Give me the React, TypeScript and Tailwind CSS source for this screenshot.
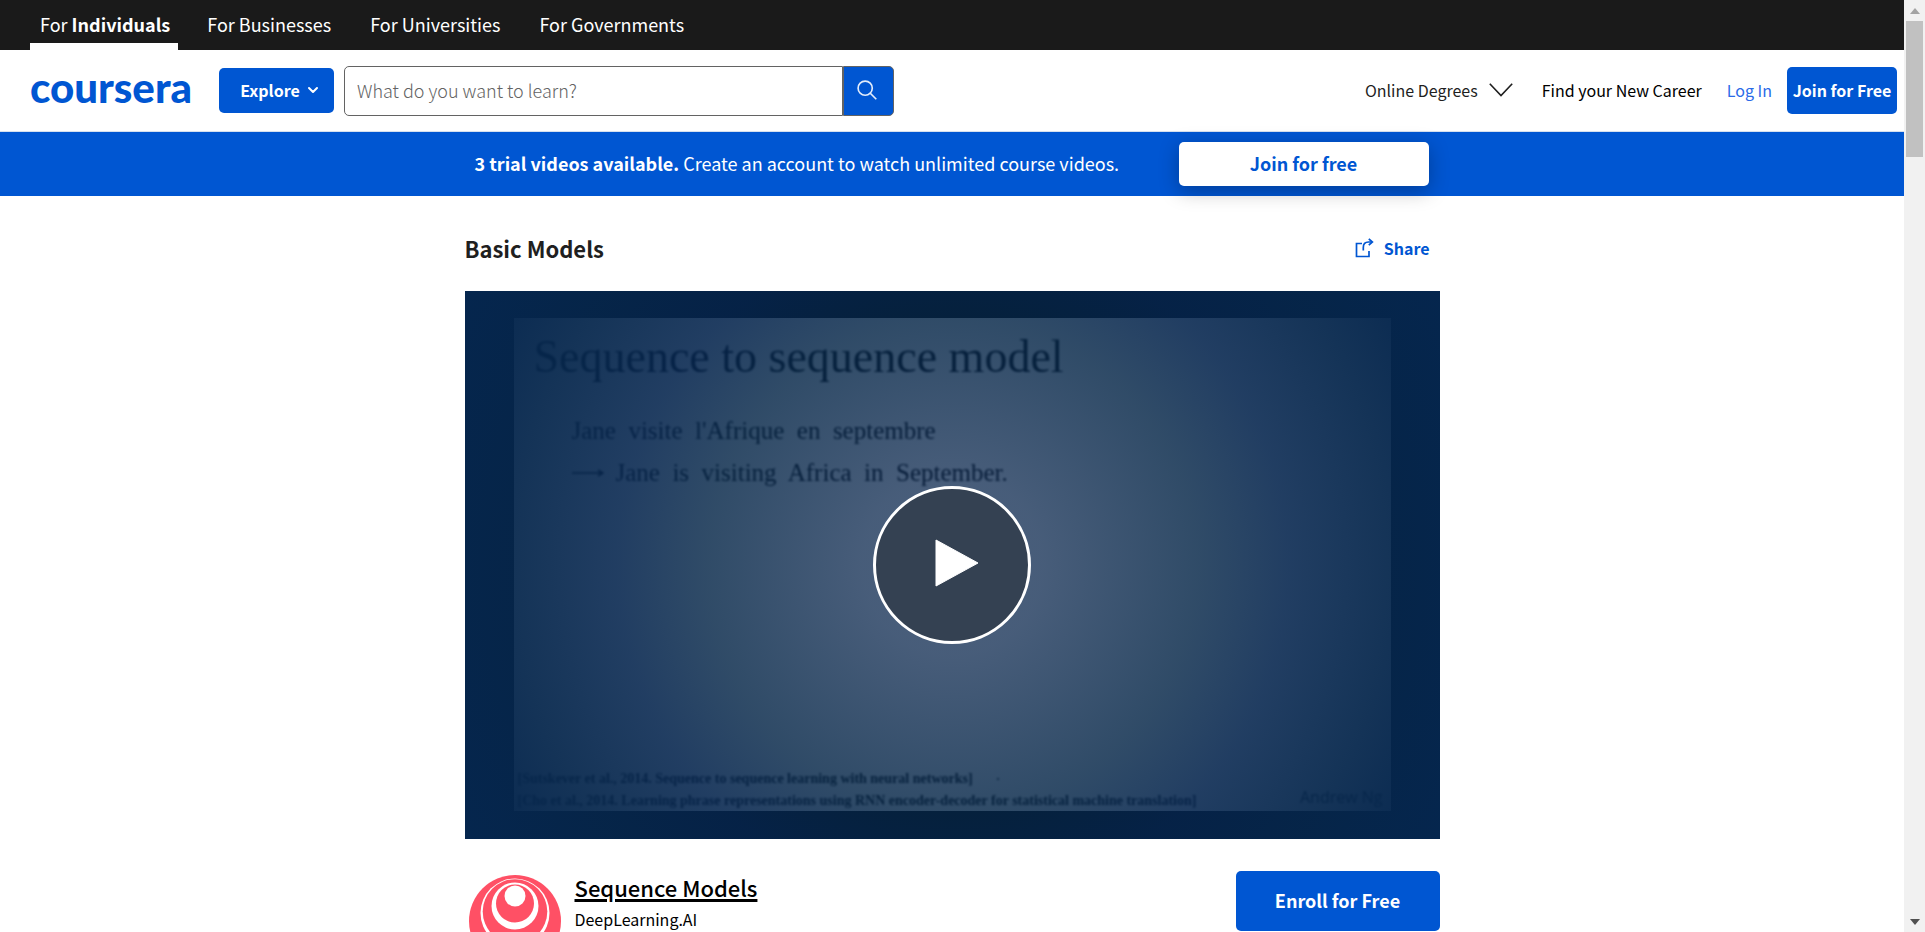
import { ChevronDown } from "lucide-react";

const audiences = ["Individuals", "Businesses", "Universities", "Governments"];

function TopBar() {
  return (
    <nav className="flex h-[50px] bg-[#1a1a1a] pl-[30px] text-[18px] leading-[48px] text-white">
      {audiences.map((name, i) => (
        <a
          key={name}
          href="#"
          className={
            i === 0
              ? "mr-[19px] border-b-[7px] border-white pr-2 pl-[10px]"
              : "mr-[19px] px-[10px]"
          }
        >
          For {i === 0 ? <b>{name}</b> : name}
        </a>
      ))}
    </nav>
  );
}

function SearchIcon() {
  return (
    <svg width="20" height="20" viewBox="0 0 22 22" fill="none" stroke="#e3edfb" strokeWidth="1.8">
      <circle cx="9" cy="9" r="7.8" />
      <path d="M14.6 14.6L21.2 21.2" />
    </svg>
  );
}

function Header() {
  return (
    <header className="flex h-[82px] items-center border-b border-[#d6e0ee] bg-white pr-[7px] pl-[30px] text-[#1f1f1f]">
      <a href="#" className="w-[189px] pb-2 font-['Lato',sans-serif] text-[42px] leading-[56px] font-black text-[#0056d2]">
        coursera
      </a>
      <button className="flex h-[45px] w-[115px] items-center justify-center gap-[5px] rounded-[5px] bg-[#0056d2] pb-px pl-2 text-[16px] leading-6 font-bold text-white">
        Explore
        <ChevronDown size={16} strokeWidth={3} />
      </button>
      <form className="ml-[10px] flex h-[50px] w-[550px]" onSubmit={(e) => e.preventDefault()}>
        <input
          aria-label="Search"
          placeholder="What do you want to learn?"
          className="min-w-0 grow rounded-l-[5px] border border-[#636363] px-3 text-[18px] font-light text-[#1f1f1f] placeholder:text-[#636363]"
        />
        <button
          aria-label="Submit search"
          className="flex w-[51px] items-center justify-center rounded-r-[5px] border border-[#636363] bg-[#0056d2] pr-1 pb-px"
        >
          <SearchIcon />
        </button>
      </form>
      <div className="ml-auto flex items-center text-[16px] leading-6">
        <button className="flex items-center gap-[11px] pb-[2px]">
          Online Degrees
          <svg width="24" height="14" viewBox="0 0 24 14" fill="none" stroke="#1f1f1f" strokeWidth="1.6">
            <path d="M0.8 0.8L12 12.6L23.2 0.8" />
          </svg>
        </button>
        <a href="#" className="ml-[29px] pb-[2px] text-black">Find your New Career</a>
        <a href="#" className="ml-[25px] pb-[2px] text-[#2a6ae8]">Log In</a>
        <button className="ml-[15px] h-[47px] w-[110px] rounded-[5px] bg-[#0056d2] pb-[2px] text-[16px] font-bold whitespace-nowrap text-white">
          Join for Free
        </button>
      </div>
    </header>
  );
}

function TrialBanner() {
  return (
    <section className="h-16 bg-[#0056d2] text-white">
      <div className="mx-auto flex h-full max-w-[975px] items-center justify-between pr-[11px] pb-px pl-[10px] text-[18px] leading-6">
        <p className="pb-px">
          <b>3 trial videos available.</b> Create an account to watch unlimited course videos.
        </p>
        <button className="h-11 w-[250px] rounded-[5px] bg-white pb-px font-bold text-[#0056d2] shadow-[0_5px_20px_rgba(0,0,0,0.28)]">
          Join for free
        </button>
      </div>
    </section>
  );
}

function ShareIcon() {
  return (
    <svg width="19" height="20" viewBox="0 0 19 20" fill="none" stroke="#0056d2" strokeWidth="1.7">
      <path d="M7 5.5H1.5V18.5H14V13" />
      <path d="M8.3 12.5V9.5C8.3 6 10 4 13.5 4H17" />
      <path d="M13.8 0.8L17.4 4L13.8 7.2" />
    </svg>
  );
}

function Slide() {
  return (
    <div className="h-full bg-white">
      <div className="flex h-full flex-col px-1 font-['Liberation_Serif',serif] whitespace-pre text-black blur-[1px]">
        <p className="mt-3 pl-4 text-[46px] leading-[54px]">Sequence to sequence model</p>
        <p className="mt-8 pl-[54px] text-[25px] leading-[30px]">Jane  visite  l'Afrique  en  septembre</p>
        <p className="mt-3 flex items-center gap-3 pl-[54px] text-[25px] leading-[30px]">
          <svg width="32" height="8" viewBox="0 0 32 8" fill="none" stroke="black" strokeWidth="1.5">
            <path d="M0 4H30M26 1L31 4L26 7" />
          </svg>
          Jane  is  visiting  Africa  in  September.
        </p>
        <div className="mt-auto flex items-end justify-between">
          <div className="text-[14px] leading-6">
            <p className="flex items-center gap-6 font-bold">
              [Sutskever et al., 2014. Sequence to sequence learning with neural networks]
              <span className="size-[2px] rounded-full bg-black" />
            </p>
            <p className="leading-5 font-bold">[Cho et al., 2014. Learning phrase representations using RNN encoder-decoder for statistical machine translation]</p>
          </div>
          <p className="pr-1 pb-[2px] font-['Open_Sans',sans-serif] text-[16px] leading-6">Andrew Ng</p>
        </div>
      </div>
    </div>
  );
}

function VideoPreview() {
  return (
    <div className="relative h-[548px] bg-black">
      <div className="h-full px-[49px] pt-[27px] pb-7">
        <Slide />
      </div>
      <div className="absolute inset-0 flex items-center justify-center bg-[radial-gradient(circle_at_50%_50%,rgba(7,36,75,0.73)_0px,rgba(7,36,75,0.74)_90px,rgba(6,39,73,0.83)_245px,rgba(6,38,79,0.89)_335px,rgba(6,39,77,0.94)_437px,rgb(5,38,78)_560px)]">
        <button
          aria-label="Play video"
          className="flex h-[158px] w-[158px] items-center justify-center rounded-full border-[3px] border-white bg-[#344152]"
        >
          <svg width="53" height="60" viewBox="0 0 53 60" fill="white" stroke="white" strokeLinejoin="round">
            <path d="M10 5V51L52 28Z" />
          </svg>
        </button>
      </div>
    </div>
  );
}

function PartnerLogo() {
  return (
    <svg width="92" height="92" viewBox="0 0 92 92">
      <circle cx="46" cy="46" r="46" fill="#ff5065" />
      <circle cx="46" cy="38" r="34.5" fill="white" />
      <circle cx="46" cy="36.5" r="32.3" fill="#ff5065" />
      <circle cx="46" cy="31" r="23.5" fill="white" />
      <circle cx="46" cy="28.5" r="19" fill="#ff5065" />
      <circle cx="46" cy="21" r="10.5" fill="white" />
    </svg>
  );
}

function Scrollbar() {
  return (
    <div aria-hidden="true" className="flex w-[21px] shrink-0 flex-col items-center bg-[#f1f1f1]">
      <div className="flex h-[21px] items-center">
        <svg width="10" height="6" viewBox="0 0 10 6" fill="#a3a3a3"><path d="M0 6L5 0L10 6Z" /></svg>
      </div>
      <div className="h-[136px] w-[17px] bg-[#c1c1c1]" />
      <div className="mt-auto flex h-[21px] items-center">
        <svg width="10" height="6" viewBox="0 0 10 6" fill="#505050"><path d="M0 0L5 6L10 0Z" /></svg>
      </div>
    </div>
  );
}

export default function App() {
  return (
    <div className="flex h-screen overflow-hidden bg-white font-['Noto_Sans_CJK_SC',sans-serif]">
      <div className="min-w-0 grow">
        <TopBar />
        <Header />
        <TrialBanner />
        <main className="mx-auto max-w-[975px] text-[#1f1f1f]">
          <div className="flex h-[95px] items-center justify-between pt-2 pr-[10px]">
            <h1 className="text-[22px] leading-8 font-bold">Basic Models</h1>
            <button className="flex items-center gap-[10px] text-[16px] leading-6 font-bold text-[#0056d2]">
              <ShareIcon />
              Share
            </button>
          </div>
          <VideoPreview />
          <div className="flex items-start pt-8">
            <div className="pt-1 pl-1">
              <PartnerLogo />
            </div>
            <div className="pl-[14px] text-black">
              <h2 className="text-[22px] leading-8 font-medium">
                <a href="#" className="underline decoration-[3px] underline-offset-2">Sequence Models</a>
              </h2>
              <p className="text-[16px] leading-8">DeepLearning.AI</p>
            </div>
            <button className="ml-auto h-[60px] w-[204px] rounded-[5px] bg-[#0056d2] pb-[2px] text-[18px] font-bold text-white">
              Enroll for Free
            </button>
          </div>
        </main>
      </div>
      <Scrollbar />
    </div>
  );
}
